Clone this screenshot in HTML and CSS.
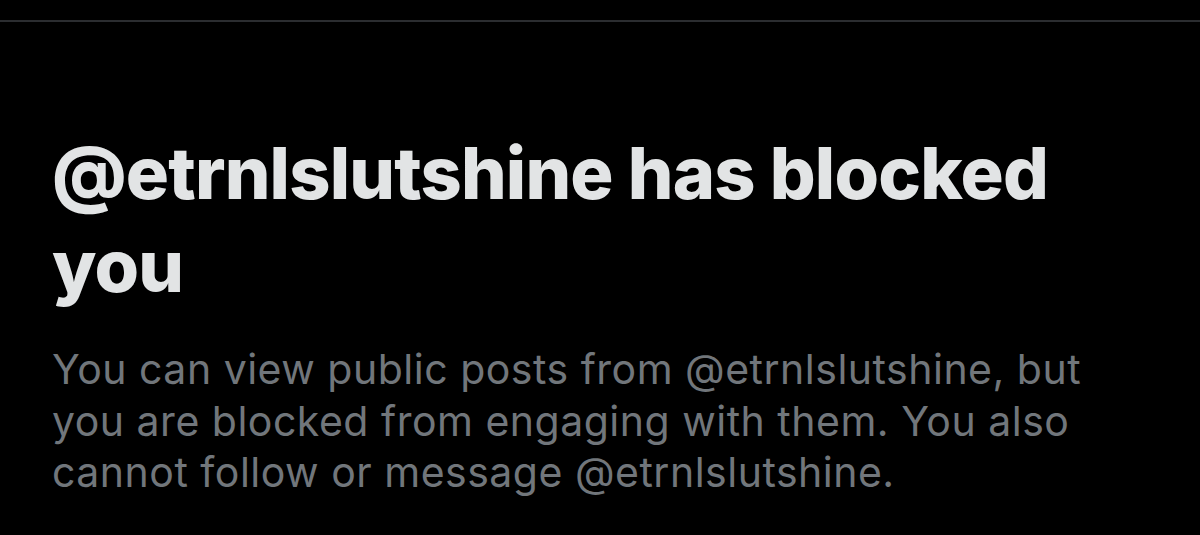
FILE: index.html
```html
<!DOCTYPE html>
<html>
<head>
<meta charset="utf-8">
<link rel="stylesheet" href="styles.css">
</head>
<body>
<div class="page">
  <div class="divider"></div>
  <div class="content">
    <h1 class="title">@etrnlslutshine has blocked you</h1>
    <p class="desc">You can view public posts from @etrnlslutshine, but you are blocked from engaging with them. You also cannot follow or message @etrnlslutshine.</p>
  </div>
</div>
</body>
</html>
```
FILE: styles.css
```css
html, body {
  margin: 0;
  padding: 0;
  background: #000;
}
.page {
  width: 1200px;
  height: 535px;
  overflow: hidden;
  background: #000;
  padding-top: 20px;
  box-sizing: border-box;
}
.divider {
  height: 2px;
  background: #2b2d30;
}
.content {
  padding: 104px 52px 0 52px;
  width: 1096px;
}
.title {
  margin: 0;
  font-family: Inter, "Liberation Sans", sans-serif;
  font-weight: 800;
  font-size: 72px;
  line-height: 93px;
  color: #e2e4e5;
  letter-spacing: -0.8px;
}
.desc {
  margin: 32px 0 0 0;
  font-family: Inter, "Liberation Sans", sans-serif;
  font-weight: 400;
  font-size: 41px;
  line-height: 51.5px;
  letter-spacing: 0.5px;
  color: #71767b;
}
```
